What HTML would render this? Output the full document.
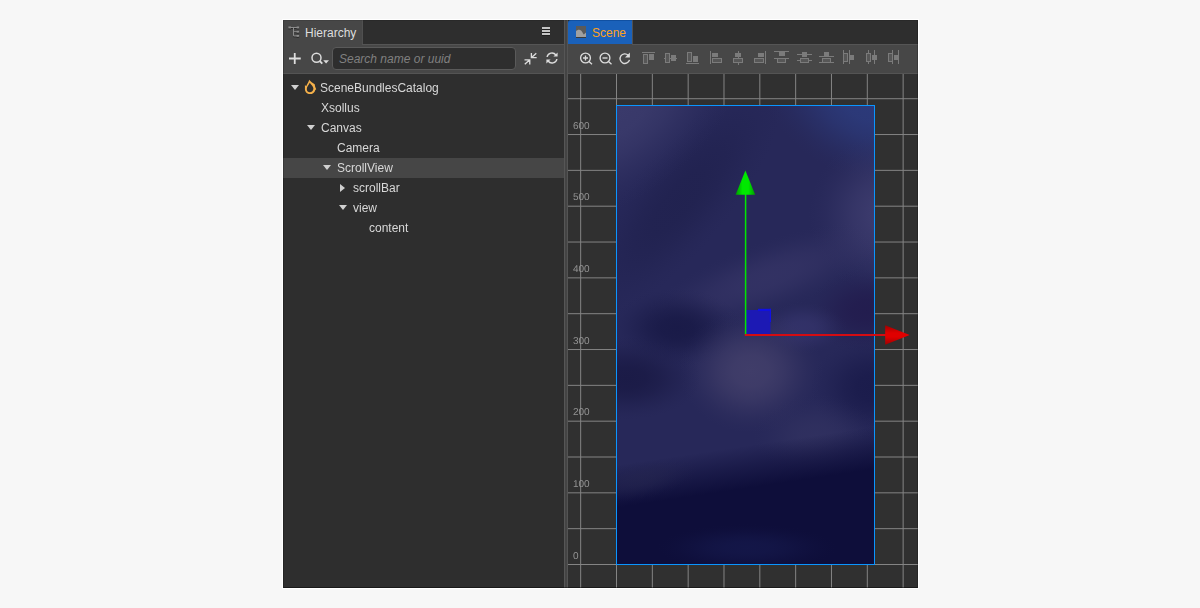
<!DOCTYPE html>
<html><head><meta charset="utf-8">
<style>
html,body{margin:0;padding:0;}
body{width:1200px;height:608px;background:#f7f7f7;position:relative;overflow:hidden;font-family:"Liberation Sans",Arial,sans-serif;font-size:12px;color:#d6d6d6;}
#frame{position:absolute;left:282px;top:19px;width:637px;height:570px;background:#fff;}
#edge{position:absolute;left:0;top:0;width:635px;height:568px;box-sizing:border-box;border:1px solid rgba(0,0,0,.2);border-top-color:rgba(0,0,0,.1);border-bottom-color:rgba(0,0,0,.45);z-index:10;}
#app{position:absolute;left:283px;top:20px;width:635px;height:568px;background:#2e2e2e;overflow:hidden;}
svg{position:absolute;overflow:visible;}
/* hierarchy */
#hier{position:absolute;left:0;top:0;width:281px;height:568px;background:#2e2e2e;}
.tabbar{position:absolute;left:0;top:0;right:0;height:24px;background:#2e2e2e;}
.tab{position:absolute;left:0;top:0;height:24px;background:#474747;}
#hier .tab{width:79px;height:25px;z-index:2;}
.tabbar .edge{position:absolute;top:0;width:1px;height:24px;background:#505050;}
#hier .tab span{position:absolute;left:22px;top:6px;line-height:14px;color:#dedede;white-space:nowrap;}
.tabbar{z-index:3;}
.toolbar{position:absolute;left:0;right:0;top:24px;height:28px;background:#474747;border-top:1px solid #555;border-bottom:1px solid #545454;box-sizing:content-box;}
#search{position:absolute;left:49px;top:2px;width:184px;height:23px;background:#2e2e2e;border:1px solid #5a5a5a;border-radius:4px;box-sizing:border-box;}
#search span{position:absolute;left:6px;top:4px;line-height:14px;font-style:italic;color:#808080;white-space:nowrap;}
#tree{position:absolute;left:0;top:0;width:281px;height:568px;will-change:transform;}
.row{position:absolute;left:0;width:281px;height:20px;line-height:20px;white-space:nowrap;}
.row.sel{background:#464646;}
.row span{position:absolute;top:0;color:#d8d8d8;}
.tri-d{position:absolute;width:0;height:0;border-left:4.25px solid transparent;border-right:4.25px solid transparent;border-top:5px solid #d0d0d0;top:7px;}
.tri-r{position:absolute;width:0;height:0;border-top:4.25px solid transparent;border-bottom:4.25px solid transparent;border-left:5px solid #d0d0d0;top:6px;}
/* splitter */
#split{position:absolute;left:281px;top:0;width:4px;height:568px;background:#444;}
#split i{position:absolute;left:0;top:0;width:1px;height:568px;background:#565656;}
#split b{position:absolute;left:3px;top:0;width:1px;height:568px;background:#545454;}
/* scene */
#scene{position:absolute;left:285px;top:0;width:350px;height:568px;background:#303030;}
#scene .tab{width:64px;background:#1a61ba;border-radius:3px 0 0 0;border-top:1px solid #1259b4;box-sizing:border-box;}
#scene .tab:after{content:"";position:absolute;left:0;top:23px;width:64px;height:1px;background:#474747;z-index:2;}
#scene .tab span{position:absolute;left:24px;top:5px;line-height:14px;color:#ffa21a;}
#view{position:absolute;left:0;top:54px;width:350px;height:514px;overflow:hidden;background:#303030;}
#grid line{stroke:#848484;stroke-width:1;}
#lbls{position:absolute;left:0;top:0;width:48px;height:514px;will-change:transform;}
#lbls span{position:absolute;left:5px;font-size:10px;line-height:12px;color:#939393;transform:rotate(0.03deg);transform-origin:0 9px;}
#img{position:absolute;left:48px;top:31px;width:259px;height:460px;box-sizing:border-box;border:1px solid #0a95ff;background:#272859;overflow:hidden;}
#neb{position:absolute;left:0;top:0;width:258px;height:458px;overflow:hidden;}
#neb i{position:absolute;display:block;}
</style></head><body>
<div id="frame"></div>
<div id="app">
 <div id="hier">
  <div class="tabbar"><div class="tab">
   <svg width="12" height="12" style="left:5px;top:6px" viewBox="0 0 12 12">
    <g fill="none" stroke="#2a2a2a" stroke-width="1" transform="translate(0,1)"><path d="M1 1.5H10M5.5 1.5V9.9H10M5.5 5.7H10"/></g>
    <g fill="#2a2a2a" transform="translate(0,1)"><rect x="0.4" y="0.5" width="2.6" height="1.9"/><rect x="8.6" y="0.5" width="2.5" height="1.9"/><rect x="8.6" y="4.8" width="2.5" height="1.8"/><rect x="8.6" y="9" width="2.5" height="1.8"/></g>
    <g fill="none" stroke="#8c8c8c" stroke-width="1"><path d="M1 1.5H10M5.5 1.5V9.9H10M5.5 5.7H10"/></g>
    <g fill="#8c8c8c"><rect x="0.4" y="0.5" width="2.6" height="1.9"/><rect x="8.6" y="0.5" width="2.5" height="1.9"/><rect x="8.6" y="4.8" width="2.5" height="1.8"/><rect x="8.6" y="9" width="2.5" height="1.8"/></g>
   </svg>
   <span>Hierarchy</span></div><i class="edge" style="left:79px"></i>
   <svg width="8" height="9" style="left:259px;top:7px" viewBox="0 0 8 9"><g fill="#1e1e1e"><rect x="0" y="1" width="8" height="2"/><rect x="0" y="4" width="8" height="2"/><rect x="0" y="7" width="8" height="2"/></g><g fill="#c4c4c4"><rect x="0" y="0" width="8" height="2"/><rect x="0" y="3" width="8" height="2"/><rect x="0" y="6" width="8" height="2"/></g></svg>
  </div>
  <div class="toolbar">
   <svg width="12" height="12" style="left:6px;top:8px" viewBox="0 0 12 12"><path d="M0 5.5H11.75M5.75 0V11" stroke="#dedede" stroke-width="1.8" fill="none"/></svg>
   <svg width="18" height="14" style="left:27px;top:7px" viewBox="0 0 18 14"><circle cx="6.5" cy="5.75" r="4.5" fill="none" stroke="#dcdcdc" stroke-width="1.5"/><path d="M9.7 9 L12.3 11.6" stroke="#dcdcdc" stroke-width="1.8" fill="none"/><path d="M13.2 8.3H19L16.1 11.6Z" fill="#dcdcdc"/></svg>
   <div id="search"><span>Search name or uuid</span></div>
   <svg width="13.44" height="11.5" style="left:240.5px;top:7.8px" viewBox="0 0 14 12"><g stroke="#dcdcdc" stroke-width="1.4" fill="none"><path d="M7.7 0V4.9H13.2M8 4.6L12.8 0.3"/><path d="M0.5 7.1H6V12M5.7 7.4L0.8 11.7"/></g></svg>
   <svg width="12" height="12" style="left:263.4px;top:7.4px" viewBox="0 0 12 12"><g stroke="#dcdcdc" stroke-width="1.4" fill="none"><path d="M1.1 5A4.9 4.9 0 0 1 9.9 3"/><path d="M10.9 7A4.9 4.9 0 0 1 2.1 9"/></g><path d="M11.6 0.4V4.6H7.4Z M0.4 11.6V7.4H4.6Z" fill="#dcdcdc"/></svg>
  </div>
  <div id="tree">
  <div class="row" style="top:58px"><i class="tri-d" style="left:8px"></i>
   <svg width="13" height="16" style="left:21px;top:1px" viewBox="0 0 13 16"><path d="M5.3 0.8 C6.4 2.8 8.8 4 10.7 5.3 C10.9 7 11.3 8.6 12.2 10.2 L11.3 10.9 C10.8 13.4 8.6 15.1 6 15.1 C3.2 15.1 0.9 13 0.9 10 C0.9 8.6 1 7.4 0.9 6.2 L2.3 6.9 C3.2 4.9 4.6 3 5.3 0.8 Z M5.8 3.8 C4.9 5.9 2.8 7.6 2.8 9.9 C2.8 12 4.2 13.2 5.8 13.2 C7.7 13.2 9.4 12 9.4 9.6 C9.4 7.3 6.9 5.8 5.8 3.8 Z" fill="#f4b04a" fill-rule="evenodd"/></svg>
   <span style="left:37px">SceneBundlesCatalog</span></div>
  <div class="row" style="top:78px"><span style="left:38px">Xsollus</span></div>
  <div class="row" style="top:98px"><i class="tri-d" style="left:24px"></i><span style="left:38px">Canvas</span></div>
  <div class="row" style="top:118px"><span style="left:54px">Camera</span></div>
  <div class="row sel" style="top:138px"><i class="tri-d" style="left:40px"></i><span style="left:54px">ScrollView</span></div>
  <div class="row" style="top:158px"><i class="tri-r" style="left:57px"></i><span style="left:70px">scrollBar</span></div>
  <div class="row" style="top:178px"><i class="tri-d" style="left:56px"></i><span style="left:70px">view</span></div>
  <div class="row" style="top:198px"><span style="left:86px">content</span></div>
  </div>
 </div>
 <div id="edge"></div>
 <div id="split"><i></i><b></b></div>
 <div id="scene">
  <div class="tabbar"><div class="tab">
   <svg width="10" height="12" style="left:8px;top:5px" viewBox="0 0 10 12"><rect x="0" y="1" width="10" height="11" fill="#3a3a3a"/><rect x="0" y="0" width="10" height="11" fill="#5a5a5a"/><path d="M0 11V5.2C1.2 3.8 3.4 3.2 5 4.4C6 5.3 6.8 7 7.8 8.4L10 6.4V11Z" fill="#a0a0a0"/></svg>
   <span>Scene</span></div><i class="edge" style="left:64px"></i></div>
  <div class="toolbar" id="stb"><svg width="350" height="28" style="left:0;top:0"><g transform="translate(-568,-45)"><g stroke="#dcdcdc" stroke-width="1.35" fill="none"><circle cx="585.5" cy="58" r="4.9"/><path d="M589 61.5L592 64.3"/><path d="M583 58H588M585.5 55.5V60.5"/><circle cx="605" cy="58" r="4.9"/><path d="M608.5 61.5L611.5 64.3"/><path d="M602.5 58H607.5"/><path d="M628.2 55.2A4.8 4.8 0 1 0 629.5 59.8"/></g><path d="M629.9 52.6V57.5H625Z" fill="#dcdcdc"/><rect x="642" y="52" width="13" height="1" fill="#7b7b7b"/><rect x="643" y="54" width="5" height="10" fill="#7b7b7b"/><rect x="644" y="55" width="3" height="8" fill="#575757"/><rect x="649" y="54" width="5" height="6" fill="#7b7b7b"/><rect x="664" y="58" width="13" height="1" fill="#7b7b7b"/><rect x="665" y="53" width="5" height="10" fill="#7b7b7b"/><rect x="666" y="54" width="3" height="8" fill="#575757"/><rect x="671" y="55" width="5" height="6" fill="#7b7b7b"/><rect x="686" y="63" width="13" height="1" fill="#7b7b7b"/><rect x="687" y="52" width="5" height="10" fill="#7b7b7b"/><rect x="688" y="53" width="3" height="8" fill="#575757"/><rect x="693" y="56" width="5" height="6" fill="#7b7b7b"/><rect x="710" y="51" width="1" height="13" fill="#7b7b7b"/><rect x="712" y="53" width="6" height="4" fill="#7b7b7b"/><rect x="712" y="58" width="10" height="5" fill="#7b7b7b"/><rect x="713" y="59" width="8" height="3" fill="#575757"/><rect x="738" y="51" width="1" height="2" fill="#7b7b7b"/><rect x="738" y="57" width="1" height="1" fill="#7b7b7b"/><rect x="738" y="63" width="1" height="2" fill="#7b7b7b"/><rect x="735" y="53" width="6" height="4" fill="#7b7b7b"/><rect x="733" y="58" width="10" height="5" fill="#7b7b7b"/><rect x="734" y="59" width="8" height="3" fill="#575757"/><rect x="765" y="51" width="1" height="13" fill="#7b7b7b"/><rect x="758" y="53" width="6" height="4" fill="#7b7b7b"/><rect x="754" y="58" width="10" height="5" fill="#7b7b7b"/><rect x="755" y="59" width="8" height="3" fill="#575757"/><rect x="774" y="51" width="15" height="1" fill="#7b7b7b"/><rect x="779" y="52" width="6" height="4" fill="#7b7b7b"/><rect x="774" y="58" width="15" height="1" fill="#7b7b7b"/><rect x="777" y="58" width="9" height="5" fill="#7b7b7b"/><rect x="778" y="59" width="7" height="3" fill="#575757"/><rect x="797" y="54" width="15" height="1" fill="#7b7b7b"/><rect x="802" y="52" width="5" height="5" fill="#7b7b7b"/><rect x="797" y="60" width="15" height="1" fill="#7b7b7b"/><rect x="800" y="58" width="9" height="5" fill="#7b7b7b"/><rect x="801" y="59" width="7" height="3" fill="#575757"/><rect x="824" y="52" width="5" height="4" fill="#7b7b7b"/><rect x="819" y="56" width="15" height="1" fill="#7b7b7b"/><rect x="822" y="58" width="9" height="5" fill="#7b7b7b"/><rect x="823" y="59" width="7" height="3" fill="#575757"/><rect x="819" y="62" width="15" height="1" fill="#7b7b7b"/><rect x="843" y="50" width="1" height="14" fill="#7b7b7b"/><rect x="849" y="50" width="1" height="14" fill="#7b7b7b"/><rect x="843" y="53" width="5" height="9" fill="#7b7b7b"/><rect x="844" y="54" width="3" height="7" fill="#575757"/><rect x="850" y="55" width="4" height="5" fill="#7b7b7b"/><rect x="866" y="53" width="5" height="9" fill="#7b7b7b"/><rect x="867" y="54" width="3" height="7" fill="#575757"/><rect x="868" y="50" width="1" height="3" fill="#7b7b7b"/><rect x="868" y="62" width="1" height="2" fill="#7b7b7b"/><rect x="874" y="50" width="1" height="14" fill="#7b7b7b"/><rect x="872" y="55" width="5" height="5" fill="#7b7b7b"/><rect x="888" y="53" width="5" height="9" fill="#7b7b7b"/><rect x="889" y="54" width="3" height="7" fill="#575757"/><rect x="892" y="50" width="1" height="14" fill="#7b7b7b"/><rect x="898" y="50" width="1" height="14" fill="#7b7b7b"/><rect x="894" y="55" width="4" height="5" fill="#7b7b7b"/></g></svg>
  </div>
  <div id="view">
   <svg id="grid" width="350" height="514" style="left:0;top:0"><line x1="12.67" y1="0" x2="12.67" y2="514"/><line x1="48.50" y1="0" x2="48.50" y2="514"/><line x1="84.33" y1="0" x2="84.33" y2="514"/><line x1="120.16" y1="0" x2="120.16" y2="514"/><line x1="155.99" y1="0" x2="155.99" y2="514"/><line x1="191.82" y1="0" x2="191.82" y2="514"/><line x1="227.65" y1="0" x2="227.65" y2="514"/><line x1="263.48" y1="0" x2="263.48" y2="514"/><line x1="299.31" y1="0" x2="299.31" y2="514"/><line x1="335.14" y1="0" x2="335.14" y2="514"/><line x1="0" y1="490.50" x2="350" y2="490.50"/><line x1="0" y1="454.67" x2="350" y2="454.67"/><line x1="0" y1="418.84" x2="350" y2="418.84"/><line x1="0" y1="383.01" x2="350" y2="383.01"/><line x1="0" y1="347.18" x2="350" y2="347.18"/><line x1="0" y1="311.35" x2="350" y2="311.35"/><line x1="0" y1="275.52" x2="350" y2="275.52"/><line x1="0" y1="239.69" x2="350" y2="239.69"/><line x1="0" y1="203.86" x2="350" y2="203.86"/><line x1="0" y1="168.03" x2="350" y2="168.03"/><line x1="0" y1="132.20" x2="350" y2="132.20"/><line x1="0" y1="96.37" x2="350" y2="96.37"/><line x1="0" y1="60.54" x2="350" y2="60.54"/><line x1="0" y1="24.71" x2="350" y2="24.71"/></svg>
   <div id="lbls"><span style="top:476px">0</span><span style="top:404px">100</span><span style="top:332px">200</span><span style="top:261px">300</span><span style="top:189px">400</span><span style="top:117px">500</span><span style="top:46px">600</span></div>
   <div id="img"><div id="neb"><i style="left:-88px;top:45px;width:300px;height:100px;transform:rotate(-50deg);background:radial-gradient(closest-side,rgba(32,33,78,0.800) 0%,rgba(32,33,78,0.736) 25%,rgba(32,33,78,0.544) 45%,rgba(32,33,78,0.320) 62%,rgba(32,33,78,0.136) 78%,rgba(32,33,78,0.040) 90%,rgba(32,33,78,0.000) 100%)"></i><i style="left:-150px;top:-80px;width:300px;height:170px;transform:rotate(-38deg);background:radial-gradient(closest-side,rgba(58,58,107,1.000) 0%,rgba(58,58,107,0.920) 25%,rgba(58,58,107,0.680) 45%,rgba(58,58,107,0.400) 62%,rgba(58,58,107,0.170) 78%,rgba(58,58,107,0.050) 90%,rgba(58,58,107,0.000) 100%)"></i><i style="left:137px;top:-83px;width:230px;height:156px;transform:rotate(25deg);background:radial-gradient(closest-side,rgba(44,58,122,1.000) 0%,rgba(44,58,122,0.920) 25%,rgba(44,58,122,0.680) 45%,rgba(44,58,122,0.400) 62%,rgba(44,58,122,0.170) 78%,rgba(44,58,122,0.050) 90%,rgba(44,58,122,0.000) 100%)"></i><i style="left:192px;top:26px;width:160px;height:164px;transform:rotate(15deg);background:radial-gradient(closest-side,rgba(60,59,109,1.000) 0%,rgba(60,59,109,0.920) 25%,rgba(60,59,109,0.680) 45%,rgba(60,59,109,0.400) 62%,rgba(60,59,109,0.170) 78%,rgba(60,59,109,0.050) 90%,rgba(60,59,109,0.000) 100%)"></i><i style="left:20px;top:136px;width:260px;height:72px;transform:rotate(-20deg);background:radial-gradient(closest-side,rgba(58,56,106,0.600) 0%,rgba(58,56,106,0.552) 25%,rgba(58,56,106,0.408) 45%,rgba(58,56,106,0.240) 62%,rgba(58,56,106,0.102) 78%,rgba(58,56,106,0.030) 90%,rgba(58,56,106,0.000) 100%)"></i><i style="left:-5px;top:182px;width:130px;height:80px;transform:rotate(0deg);background:radial-gradient(closest-side,rgba(24,25,70,0.900) 0%,rgba(24,25,70,0.828) 25%,rgba(24,25,70,0.612) 45%,rgba(24,25,70,0.360) 62%,rgba(24,25,70,0.153) 78%,rgba(24,25,70,0.045) 90%,rgba(24,25,70,0.000) 100%)"></i><i style="left:190px;top:163px;width:120px;height:84px;transform:rotate(0deg);background:radial-gradient(closest-side,rgba(34,27,77,0.850) 0%,rgba(34,27,77,0.782) 25%,rgba(34,27,77,0.578) 45%,rgba(34,27,77,0.340) 62%,rgba(34,27,77,0.145) 78%,rgba(34,27,77,0.043) 90%,rgba(34,27,77,0.000) 100%)"></i><i style="left:140px;top:196px;width:90px;height:52px;transform:rotate(0deg);background:radial-gradient(closest-side,rgba(53,52,108,0.800) 0%,rgba(53,52,108,0.736) 25%,rgba(53,52,108,0.544) 45%,rgba(53,52,108,0.320) 62%,rgba(53,52,108,0.136) 78%,rgba(53,52,108,0.040) 90%,rgba(53,52,108,0.000) 100%)"></i><i style="left:62px;top:203px;width:144px;height:124px;transform:rotate(0deg);background:radial-gradient(closest-side,rgba(64,61,105,1.000) 0%,rgba(64,61,105,0.920) 25%,rgba(64,61,105,0.680) 45%,rgba(64,61,105,0.400) 62%,rgba(64,61,105,0.170) 78%,rgba(64,61,105,0.050) 90%,rgba(64,61,105,0.000) 100%)"></i><i style="left:-65px;top:230px;width:150px;height:84px;transform:rotate(0deg);background:radial-gradient(closest-side,rgba(27,27,71,1.000) 0%,rgba(27,27,71,0.920) 25%,rgba(27,27,71,0.680) 45%,rgba(27,27,71,0.400) 62%,rgba(27,27,71,0.170) 78%,rgba(27,27,71,0.050) 90%,rgba(27,27,71,0.000) 100%)"></i><i style="left:193px;top:230px;width:124px;height:104px;transform:rotate(0deg);background:radial-gradient(closest-side,rgba(27,28,76,1.000) 0%,rgba(27,28,76,0.920) 25%,rgba(27,28,76,0.680) 45%,rgba(27,28,76,0.400) 62%,rgba(27,28,76,0.170) 78%,rgba(27,28,76,0.050) 90%,rgba(27,28,76,0.000) 100%)"></i><i style="left:136px;top:288px;width:124px;height:84px;transform:rotate(0deg);background:radial-gradient(closest-side,rgba(53,53,99,0.600) 0%,rgba(53,53,99,0.552) 25%,rgba(53,53,99,0.408) 45%,rgba(53,53,99,0.240) 62%,rgba(53,53,99,0.102) 78%,rgba(53,53,99,0.030) 90%,rgba(53,53,99,0.000) 100%)"></i><i style="left:-40px;top:340px;width:340px;height:200px;transform:rotate(-8.5deg);transform-origin:170px 30px;background:linear-gradient(180deg,rgba(14,14,58,0) 0,rgba(14,14,58,.5) 20px,rgba(14,14,58,1) 42px,#0e0e3a 100%)"></i><i style="left:-38px;top:354px;width:120px;height:40px;transform:rotate(-12deg);background:radial-gradient(closest-side,rgba(38,39,80,0.550) 0%,rgba(38,39,80,0.506) 25%,rgba(38,39,80,0.374) 45%,rgba(38,39,80,0.220) 62%,rgba(38,39,80,0.094) 78%,rgba(38,39,80,0.028) 90%,rgba(38,39,80,0.000) 100%)"></i><i style="left:40px;top:418px;width:180px;height:48px;transform:rotate(0deg);background:radial-gradient(closest-side,rgba(20,23,73,0.900) 0%,rgba(20,23,73,0.828) 25%,rgba(20,23,73,0.612) 45%,rgba(20,23,73,0.360) 62%,rgba(20,23,73,0.153) 78%,rgba(20,23,73,0.045) 90%,rgba(20,23,73,0.000) 100%)"></i></div></div>
   <svg id="gizmo" width="350" height="514" style="left:0;top:0">
    <defs>
     <linearGradient id="gg" x1="0" x2="1" y1="0" y2="0"><stop offset="0" stop-color="#009a00"/><stop offset=".35" stop-color="#00e800"/><stop offset=".65" stop-color="#00e800"/><stop offset="1" stop-color="#009a00"/></linearGradient>
     <linearGradient id="rg" x1="0" x2="0" y1="0" y2="1"><stop offset="0" stop-color="#a00000"/><stop offset=".4" stop-color="#e00000"/><stop offset=".6" stop-color="#e00000"/><stop offset="1" stop-color="#a00000"/></linearGradient>
    </defs>
    <rect x="178" y="236" width="24.5" height="24" fill="#1c19b4"/>
    <rect x="190" y="234.8" width="13" height="2.1" fill="#1010e6"/><rect x="201.8" y="234.8" width="1.2" height="13.3" fill="#1010e6"/>
    <line x1="177.6" y1="261" x2="177.6" y2="120" stroke="#00e800" stroke-width="1.5"/>
    <line x1="176.8" y1="261" x2="318" y2="261" stroke="#d40c12" stroke-width="2"/>
    <path d="M177.4 96.4L187.2 120.8H167.6Z" fill="url(#gg)"/>
    <path d="M341.7 261L317.2 270.7V251.2Z" fill="url(#rg)"/>
   </svg>
  </div>
 </div>
</div>
</body></html>
